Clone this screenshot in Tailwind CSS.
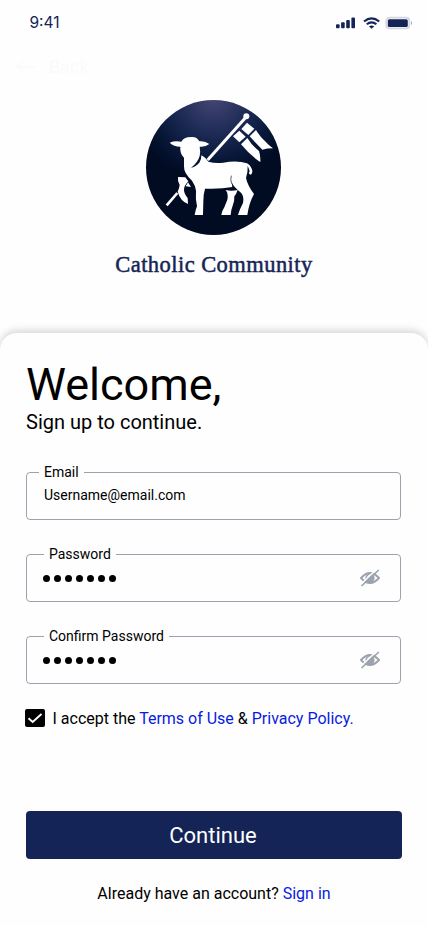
<!DOCTYPE html>
<html lang="en">
<head>
<meta charset="utf-8">
<meta name="viewport" content="width=device-width, initial-scale=1">
<title>Catholic Community</title>
<script src="https://cdn.jsdelivr.net/npm/@tailwindcss/browser@4"></script>
</head>
<body class="bg-white font-[Roboto,sans-serif] text-black">
<div class="flex h-[926px] w-[428px] flex-col overflow-hidden bg-[#fefefe]">
  <header class="flex h-[44px] shrink-0 items-center justify-between pt-[1px] pr-[16px] pl-[29.500px]">
    <span class="font-[Inter,sans-serif] text-[15.500px] leading-[20px] text-[#152456]">9:41</span>
    <svg class="h-[14px] w-[76px]" viewBox="0 0 76 14" fill="#152456">
      <rect x="0" y="8.3" width="3.6" height="4" rx="1"/><rect x="5.1" y="6.3" width="3.6" height="6" rx="1"/><rect x="10.2" y="4" width="3.6" height="8.300" rx="1"/><rect x="15.400" y="1.600" width="3.600" height="10.700" rx="1"/>
      <g fill="none" stroke="#152456" stroke-width="2.1"><path d="M28 5.500q7.600-6.400 15.200 0M30.800 8.300q4.800-4 9.600 0"/></g><path d="M33 10.400q2.600-1.900 5.200 0l-2.600 2.400z"/>
      <rect x="50.300" y="1.600" width="23" height="10.800" rx="3.200" fill="none" stroke="#152456" stroke-opacity=".18" stroke-width="1.800"/><rect x="51.800" y="3.200" width="20" height="7.800" rx="1.500"/><path d="M75 5v4q1.200-.6 1.200-2t-1.200-2" opacity=".35"/>
    </svg>
  </header>
  <div class="flex h-[56px] shrink-0 items-start gap-[13px] pt-[11px] pl-[16px] text-[#f9fbfb]">
    <svg class="mt-[5px] h-[14px] w-[20px]" viewBox="0 0 20 14" fill="none" stroke="currentColor" stroke-width="1.6"><path d="M20 7H1.500M7.500.5 1 7l6.500 6.500"/></svg>
    <span class="font-[Inter,sans-serif] text-[17px] leading-[24px]">Back</span>
  </div>
  <svg class="ml-[146px] size-[135px] shrink-0" viewBox="18 18 405 405" fill="#fff">
    <defs><radialGradient id="night" gradientUnits="userSpaceOnUse" cx="220" cy="10" r="250"><stop offset="0" stop-color="#454775"/><stop offset=".45" stop-color="#1c2a54"/><stop offset=".75" stop-color="#071738"/><stop offset="1" stop-color="#010b22"/></radialGradient></defs>
    <circle cx="220.500" cy="220.500" r="202.500" fill="url(#night)"/>
    <path d="M203 198 319 68" stroke="#fff" stroke-width="9"/><circle cx="319" cy="67" r="9"/>
    <path d="M80 334 112 297" stroke="#fff" stroke-width="8"/>
    <path d="M321 86 343 104 325 123 304 105zM298 110 317 128 298 145 279 127z"/>
    <path d="M348 108C358 126 378 146 399 163Q380 163 367 167Q347 147 329 127z"/>
    <path d="M322 132Q336 155 357 171Q362 186 361 204Q330 184 303 151z"/>
    <path d="M89 146Q105 139 124 143C128 134 138 129 153 129S173 133 178 142Q195 140 208 150Q195 160 179 158Q182 174 179 186Q173 207 153 221Q165 220 178 206Q185 195 184 184Q194 188 205 203Q226 209 250 206Q291 198 321 208C333 214 340 231 336 238Q331 247 326 236Q331 236 327 226L323 215Q324 236 318 252Q323 275 342 300Q327 327 322 363H294Q300 343 309 327Q313 306 303 296Q282 281 275 265L277 279Q242 286 195 284Q190 301 190 323L189 363H164Q166 349 171 337Q166 315 168 290Q166 274 156 260Q131 238 132 217V191C122 181 120 169 121 158Q101 158 89 146z"/>
    <path d="M274 245Q270 256 275 269" fill="none" stroke="#061027" stroke-width="2"/>
    <path d="M257 288Q275 293 293 288Q289 300 283 307Q284 323 278 335Q273 347 272 363H244Q247 348 253 340L262 317Q266 299 257 288z"/>
    <path d="M114 249 136 250Q139 255 145 262Q132 275 132 288Q132 299 143 312L144 330Q121 321 113 293Q118 282 119 273Q112 260 114 249z"/><path d="M144 265 153 279 137 277z"/>
  </svg>
  <div class="flex h-[98px] shrink-0 justify-center pt-[15px]">
    <h1 class="font-['Liberation_Serif',serif] text-[22.500px] leading-[30px] tracking-[0.45px] whitespace-nowrap text-[#152456] [-webkit-text-stroke:0.5px_#152456]">Catholic Community</h1>
  </div>
  <main class="flex h-[593px] shrink-0 flex-col rounded-t-[17px] bg-[#fefefe] pr-[26px] pl-[26px] pt-[25px] shadow-[0_-3px_7px_rgba(0,0,0,0.15)]">
    <h2 class="text-[45px] leading-[53px]">Welcome,</h2>
    <p class="-mt-px text-[20px] leading-[24px]">Sign up to continue.</p>
    <form class="flex flex-col">
      <div class="relative mt-[38px] flex h-[48px] w-[375px] items-center rounded-[4px] border border-[#9ca3af] pl-[17px]">
        <label class="absolute top-[-9px] left-[12px] bg-[#fefefe] px-[5px] text-[14px] leading-[16px]">Email</label>
        <span class="-mt-[3px] text-[14px] leading-[16px]">Username@email.com</span>
      </div>
      <div class="relative mt-[34px] flex h-[48px] w-[375px] items-center justify-between rounded-[4px] border border-[#9ca3af] pr-[20px] pl-[16px]">
        <label class="absolute top-[-9px] left-[17px] bg-[#fefefe] px-[5px] text-[14px] leading-[16px]">Password</label>
        <div class="flex gap-[4px]"><i class="size-[7px] rounded-full bg-black"></i><i class="size-[7px] rounded-full bg-black"></i><i class="size-[7px] rounded-full bg-black"></i><i class="size-[7px] rounded-full bg-black"></i><i class="size-[7px] rounded-full bg-black"></i><i class="size-[7px] rounded-full bg-black"></i><i class="size-[7px] rounded-full bg-black"></i></div>
        <svg class="h-[18px] w-[20px]" viewBox="0 0 20 18"><path d="M1 9Q10-1 19 9Q10 19 1 9z" fill="none" stroke="#9ca3af" stroke-width="1.900"/><circle cx="10" cy="9" r="4.600" fill="#9ca3af"/><path d="M7.500 8Q8 6.300 10 6" fill="none" stroke="#fff"/><path d="M.5 15.500 17.500-.5" stroke="#fff" stroke-width="1.500"/><path d="M1.500 17 18.800 1" stroke="#9ca3af" stroke-width="1.700"/></svg>
      </div>
      <div class="relative mt-[34px] flex h-[48px] w-[375px] items-center justify-between rounded-[4px] border border-[#9ca3af] pr-[20px] pl-[16px]">
        <label class="absolute top-[-9px] left-[17px] bg-[#fefefe] px-[5px] text-[14px] leading-[16px]">Confirm Password</label>
        <div class="flex gap-[4px]"><i class="size-[7px] rounded-full bg-black"></i><i class="size-[7px] rounded-full bg-black"></i><i class="size-[7px] rounded-full bg-black"></i><i class="size-[7px] rounded-full bg-black"></i><i class="size-[7px] rounded-full bg-black"></i><i class="size-[7px] rounded-full bg-black"></i><i class="size-[7px] rounded-full bg-black"></i></div>
        <svg class="h-[18px] w-[20px]" viewBox="0 0 20 18"><path d="M1 9Q10-1 19 9Q10 19 1 9z" fill="none" stroke="#9ca3af" stroke-width="1.900"/><circle cx="10" cy="9" r="4.600" fill="#9ca3af"/><path d="M7.500 8Q8 6.300 10 6" fill="none" stroke="#fff"/><path d="M.5 15.500 17.500-.5" stroke="#fff" stroke-width="1.500"/><path d="M1.500 17 18.800 1" stroke="#9ca3af" stroke-width="1.700"/></svg>
      </div>
      <div class="mt-[25px] -ml-px flex h-[18px] items-center gap-[7.500px]">
        <svg class="h-[18px] w-[20px]" viewBox="0 0 20 18"><rect width="20" height="18" rx="2"/><path d="m3.500 9.300 4.200 3.700L16.500 5" fill="none" stroke="#fff" stroke-width="1.900"/></svg>
        <p class="pt-[2px] text-[16px] leading-[18px] whitespace-nowrap">I accept the <a class="text-[#0a1be0]">Terms of Use</a> &amp; <a class="text-[#0a1be0]">Privacy Policy.</a></p>
      </div>
      <button type="button" class="mt-[84px] h-[48px] rounded-[4px] bg-[#152456] pt-[2px] pr-[2px] text-[22px] leading-[26px] text-white">Continue</button>
    </form>
    <p class="mt-[25px] text-center text-[16px] leading-[19px]">Already have an account? <a class="text-[#0a1be0]">Sign in</a></p>
  </main>
</div>
</body>
</html>
